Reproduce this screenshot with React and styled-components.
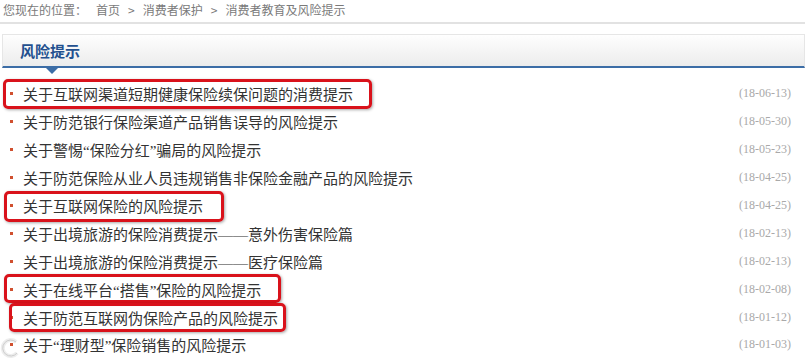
import React from 'react'
import styled, { createGlobalStyle } from 'styled-components'

const GlobalStyle = createGlobalStyle`
  html, body {
    margin: 0;
    padding: 0;
    background: #fff;
  }
  body {
    font-family: 'Noto Sans CJK SC', 'Noto Sans', sans-serif;
    overflow: hidden;
  }
`

const Page = styled.div`
  width: 805px;
  height: 359px;
  position: relative;
  overflow: hidden;
`

const Crumbs = styled.div`
  height: 22px;
  padding-left: 3px;
  border-bottom: 2px solid #e2e2e2;
  font-size: 12px;
  line-height: 20px;
  color: #7a7a7a;
  display: flex;
  gap: 9px;
`

const Sep = styled.span`
  padding: 0 8px;
`

const Panel = styled.section`
  margin: 10px 0 0 2px;
`

const PanelHead = styled.header`
  position: relative;
  height: 31px;
  border: 1px solid #e6e6e6;
  border-bottom: 2px solid #3c6da6;
  background: linear-gradient(#fefefe, #ececec);
  display: flex;
  align-items: center;
  padding-left: 17px;

  &::after {
    content: '';
    position: absolute;
    left: 43px;
    bottom: -8px;
    border-left: 6px solid transparent;
    border-right: 6px solid transparent;
    border-top: 6px solid #3c6da6;
  }
`

const PanelTitle = styled.h2`
  margin: 0;
  font-size: 15px;
  font-weight: bold;
  color: #23508f;
`

const List = styled.ul`
  list-style: none;
  margin: 12px 0 0;
  padding: 0;
`

const Row = styled.li`
  height: 27.9px;
  display: flex;
  align-items: center;
  justify-content: space-between;
  padding: 0 14px 0 8px;
`

const Title = styled.a`
  position: relative;
  display: flex;
  align-items: center;
  font-family: 'Liberation Serif', 'Noto Sans CJK SC', serif;
  font-size: 15px;
  color: #333;
  text-decoration: none;

  &::before {
    content: '';
    width: 3px;
    height: 3px;
    background: #d0502f;
    margin-right: 10px;
  }
`

const Mark = styled.span`
  position: absolute;
  left: ${p => p.$l}px;
  right: ${p => p.$r}px;
  top: ${p => p.$t}px;
  bottom: ${p => p.$b}px;
  border: 3px solid #d9121b;
  border-radius: 5px;
  box-shadow: 1px 1px 3px rgba(0, 0, 0, 0.35);
  pointer-events: none;
`

const Date = styled.span`
  font-family: 'Liberation Serif', serif;
  font-size: 12px;
  color: #a9a9a9;
`

const Watermark = styled.svg`
  position: absolute;
  left: 0;
  bottom: 0;
  opacity: 0.75;
`

const items = [
  { t: '关于互联网渠道短期健康保险续保问题的消费提示', d: '18-06-13', m: { l: -7, r: -19, t: -4, b: -5 } },
  { t: '关于防范银行保险渠道产品销售误导的风险提示', d: '18-05-30' },
  { t: '关于警惕“保险分红”骗局的风险提示', d: '18-05-23' },
  { t: '关于防范保险从业人员违规销售非保险金融产品的风险提示', d: '18-04-25' },
  { t: '关于互联网保险的风险提示', d: '18-04-25', m: { l: -6, r: -21, t: -4, b: -6 } },
  { t: '关于出境旅游的保险消费提示——意外伤害保险篇', d: '18-02-13' },
  { t: '关于出境旅游的保险消费提示——医疗保险篇', d: '18-02-13' },
  { t: '关于在线平台“搭售”保险的风险提示', d: '18-02-08', m: { l: -6, r: -20, t: -5, b: -3 } },
  { t: '关于防范互联网伪保险产品的风险提示', d: '18-01-12', m: { l: -1, r: -8, t: -4, b: -4 } },
  { t: '关于“理财型”保险销售的风险提示', d: '18-01-03' },
]

const App = () => (
  <Page>
    <GlobalStyle />
    <Crumbs>
      <span>您现在的位置：</span>
      <span>
        首页<Sep>&gt;</Sep>消费者保护<Sep>&gt;</Sep>消费者教育及风险提示
      </span>
    </Crumbs>
    <Panel>
      <PanelHead>
        <PanelTitle>风险提示</PanelTitle>
      </PanelHead>
      <List>
        {items.map((it, i) => (
          <Row key={i}>
            <Title href='#'>
              {it.t}
              {it.m && <Mark $l={it.m.l} $r={it.m.r} $t={it.m.t} $b={it.m.b} />}
            </Title>
            <Date>({it.d})</Date>
          </Row>
        ))}
      </List>
    </Panel>
    <Watermark width='22' height='22' viewBox='0 0 22 22'>
      <path d='M16 5 A8 8 0 1 0 17 16' fill='none' stroke='#e8e8e8' strokeWidth='4' />
      <path d='M16 5 A8 8 0 1 0 17 16' fill='none' stroke='#bcbcbc' strokeWidth='1' />
    </Watermark>
  </Page>
)

export default App
